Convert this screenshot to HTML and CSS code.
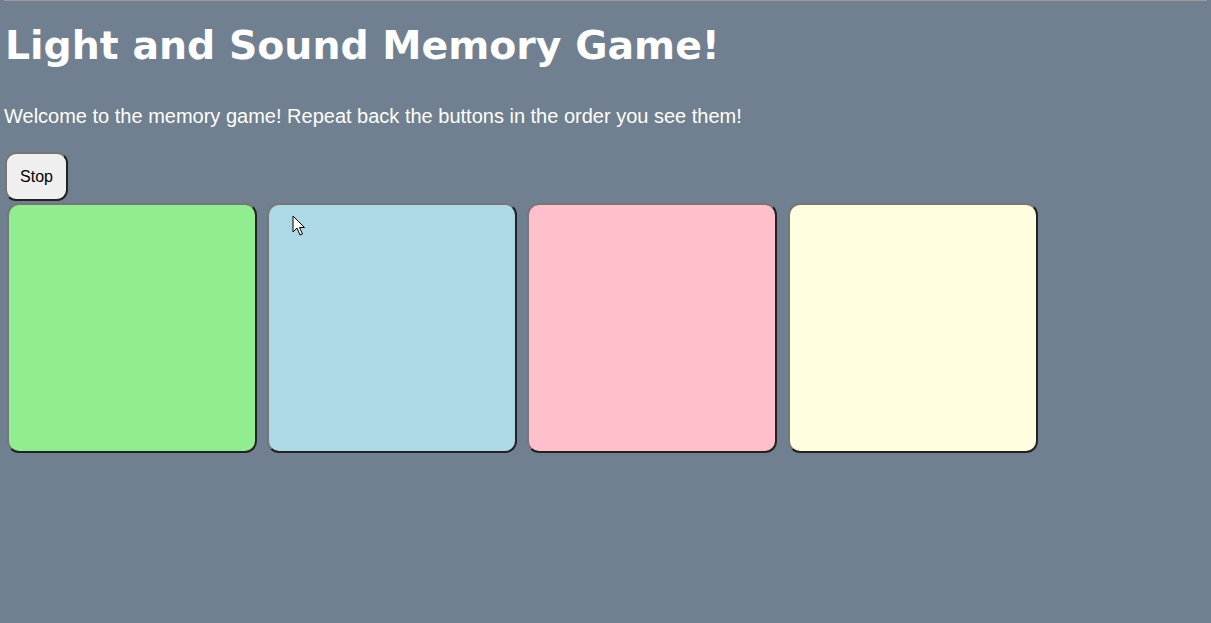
FILE: index.html
```html
<!DOCTYPE html>
<html lang="en">
<head>
<meta charset="utf-8">
<title>Light and Sound Memory Game</title>
<link rel="stylesheet" href="styles.css">
</head>
<body>
<div class="topline"></div>
<h1 class="title">Light and Sound Memory Game!</h1>
<p class="intro">Welcome to the memory game! Repeat back the buttons in the order you see them!</p>
<div class="controls">
  <button class="ctrl">Stop</button>
</div>
<div class="board">
  <button class="pad pad-green"></button>
  <button class="pad pad-blue"></button>
  <button class="pad pad-pink"></button>
  <button class="pad pad-yellow"></button>
</div>
<svg class="cursor" width="14" height="22" viewBox="0 0 14 22">
  <path d="M1 1 L1 17 L5 13 L8 20 L10.5 19 L7.5 12.5 L12.5 12.5 Z" fill="#fff" stroke="#000" stroke-width="1" stroke-linejoin="miter"/>
</svg>
</body>
</html>
```
FILE: styles.css
```css
html {
  background: #708090;
}
body {
  margin: 0 4px;
  padding: 0;
  color: #fff;
  font-family: "Liberation Sans", Arial, sans-serif;
  position: relative;
  min-height: 623px;
}
.topline {
  position: absolute;
  top: 0;
  left: -4px;
  right: -4px;
  height: 1px;
  background: #9c9c9c;
}
.title {
  margin: 0;
  padding-top: 22px;
  font-family: "DejaVu Sans", Verdana, sans-serif;
  font-weight: bold;
  font-size: 39.4px;
  line-height: 46px;
  padding-left: 1px;
}
.intro {
  margin: 37px 0 0;
  font-size: 20px;
  line-height: 23px;
}
.controls {
  margin-top: 24px;
  padding-left: 1px;
}
.ctrl {
  box-sizing: border-box;
  width: 63px;
  height: 49px;
  padding: 0;
  font-family: "Liberation Sans", Arial, sans-serif;
  font-size: 16px;
  color: #000;
  background: #efefef;
  border: 2px solid;
  border-color: #767676 #222 #222 #767676;
  border-radius: 11px;
}
.board {
  display: flex;
  gap: 10.4px;
  margin-top: 2px;
  padding-left: 2.5px;
}
.pad {
  box-sizing: border-box;
  flex: none;
  width: 250px;
  height: 250px;
  border: 2px solid;
  border-color: #767676 #222 #222 #767676;
  border-radius: 12px;
  padding: 0;
}
.pad-green { background: #90ee90; }
.pad-blue { background: #add8e6; }
.pad-pink { background: #ffc0cb; }
.pad-yellow { background: #ffffe0; }
.cursor {
  position: absolute;
  left: 288px;
  top: 215px;
}
```
